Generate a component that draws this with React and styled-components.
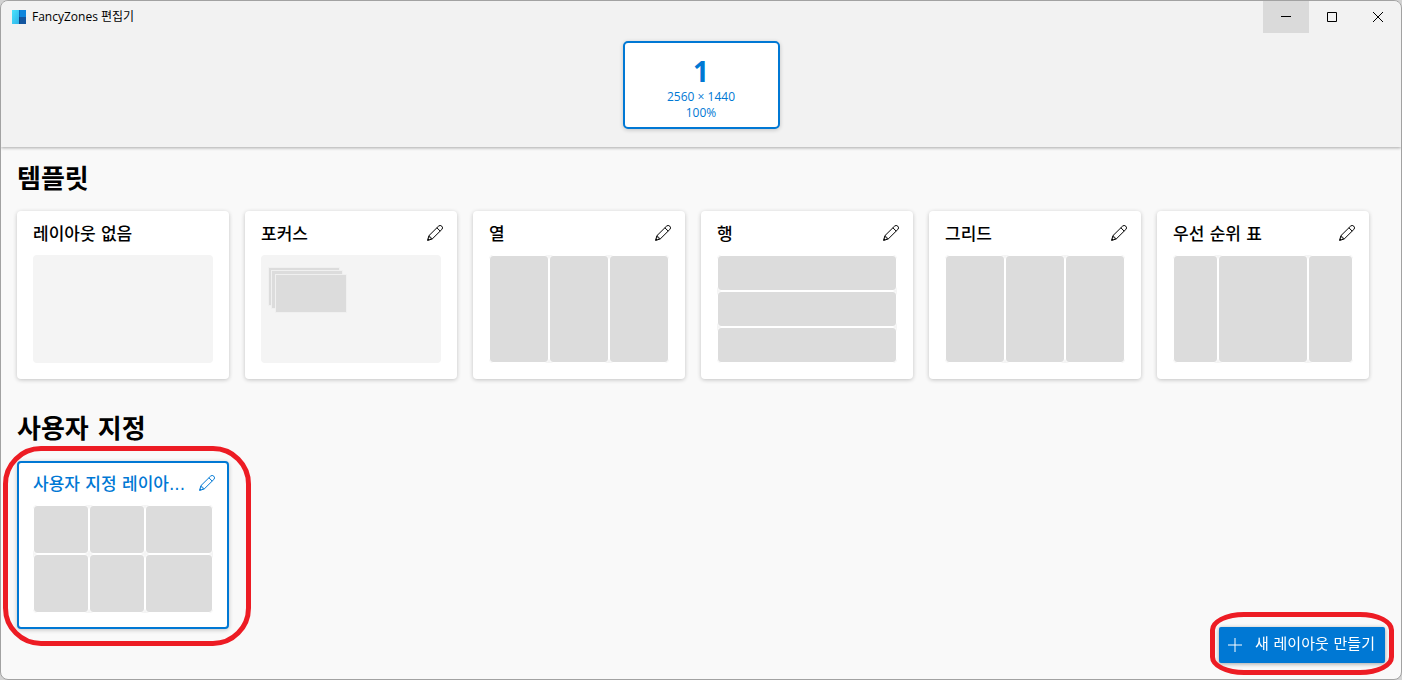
import React from "react";
import styled, { createGlobalStyle, css } from "styled-components";

const koreanFont = `"DejaVu Sans", "Noto Sans CJK KR", sans-serif`;

const Global = createGlobalStyle`
  *, *::before, *::after { box-sizing: border-box; }
  body {
    margin: 0;
    background: #d2d2d2;
    font-family: "Open Sans", "Noto Sans CJK KR", sans-serif;
    color: #000;
  }
  button { font: inherit; color: inherit; }
`;

const Window = styled.div`
  display: flex;
  flex-direction: column;
  min-height: 100vh;
  border: 1px solid #a2a2a2;
  border-radius: 8px;
  background: #f9f9f9;
  overflow: hidden;
`;

const Header = styled.header`
  display: flex;
  flex-direction: column;
  padding-bottom: 18px;
  background: #f2f2f2;
  box-shadow: 0 1px 3px rgba(0, 0, 0, 0.32);
`;

const TitleBar = styled.div`
  display: flex;
  align-items: flex-start;
  justify-content: space-between;
`;

const AppTitle = styled.div`
  display: flex;
  align-items: center;
  gap: 6px;
  height: 32px;
  padding-left: 11px;
  font-size: 12px;
  line-height: 16px;
`;

const CaptionButtons = styled.div`
  display: flex;
`;

const CaptionButton = styled.button`
  display: grid;
  place-items: center;
  width: 46px;
  height: 32px;
  padding: 0;
  border: 0;
  background: ${(p) => (p.$active ? "#dadada" : "transparent")};
`;

const Monitor = styled.button`
  display: flex;
  flex-direction: column;
  align-items: center;
  align-self: center;
  width: 157px;
  height: 88px;
  margin-top: 8px;
  padding: 10px 0 0;
  border: 2px solid #0078d4;
  border-radius: 5px;
  background: #fff;
  color: #0078d4;
  font-size: 12px;
  line-height: 16px;
  box-shadow: 0 1px 4px rgba(0, 0, 0, 0.2);
`;

const MonitorNumber = styled.strong`
  font-size: 28px;
  line-height: 36px;
`;

const Main = styled.main`
  display: flex;
  flex-direction: column;
  flex: 1;
  gap: 34px;
  padding: 16px;
`;

const Section = styled.section`
  display: flex;
  flex-direction: column;
  gap: 16px;
`;

const Heading = styled.h1`
  margin: 0;
  font-family: ${koreanFont};
  font-size: 26px;
  line-height: 32px;
  font-weight: 700;
`;

const CardList = styled.div`
  display: flex;
  flex-wrap: wrap;
  gap: 16px;
`;

const Card = styled.article`
  position: relative;
  width: 212px;
  border-radius: 4px;
  padding: 12px 16px 16px;
  background: #fff;
  box-shadow: 0 1px 4px rgba(0, 0, 0, 0.22);
  ${(p) =>
    p.$selected &&
    css`
      padding: 10px 14px 14px;
      border: 2px solid #0078d4;
      color: #0078d4;
    `}
`;

const CardHeader = styled.div`
  display: flex;
  align-items: center;
  gap: 8px;
  height: 20px;
  margin: 0 -2px 12px 0;
`;

const CardTitle = styled.h2`
  flex: 1;
  min-width: 0;
  margin: 0;
  padding-top: 2px;
  white-space: nowrap;
  font-family: ${koreanFont};
  font-size: 17px;
  line-height: 24px;
  font-weight: 500;
`;

const EditButton = styled.button`
  display: grid;
  place-items: center;
  padding: 0;
  border: 0;
  background: transparent;
`;

const Preview = styled.div`
  position: relative;
  display: grid;
  grid-template-columns: ${(p) => p.$columns || "1fr"};
  grid-template-rows: ${(p) => p.$rows || "1fr"};
  height: 108px;
  border-radius: 4px;
  background: #f4f4f4;
`;

const Zone = styled.div`
  border: 1px solid #fff;
  border-radius: 4px;
  background: #dcdcdc;
`;

const FloatingZone = styled.div`
  position: absolute;
  left: ${(p) => p.$x}px;
  top: ${(p) => p.$y}px;
  width: 72px;
  height: 39px;
  border: 1px solid #f0f0f0;
  background: #dcdcdc;
`;

const HighlightRing = styled.span`
  position: absolute;
  inset: ${(p) => p.$inset};
  border: 5px solid #ed1c24;
  border-radius: ${(p) => p.$radius};
  pointer-events: none;
`;

const CreateButton = styled.button`
  position: fixed;
  right: 17px;
  bottom: 17px;
  display: flex;
  align-items: center;
  gap: 13px;
  min-width: 166px;
  height: 36px;
  padding: 0 9px;
  border: 0;
  border-radius: 2px;
  background: #0078d4;
  color: #fff;
  font-family: ${koreanFont};
  font-size: 15px;
  line-height: 20px;
  white-space: nowrap;
  box-shadow: 0 1px 4px rgba(0, 0, 0, 0.35);
`;

const CreateLabel = styled.span`
  padding-bottom: 2px;
`;

const Pencil = () => (
  <svg width="16" height="16" viewBox="0 0 16 16" fill="none" stroke="currentColor" strokeLinejoin="round" aria-hidden="true">
    <path d="M.6 15.4 1.9 10.7 11.5 1.2a2.2 2.2 0 0 1 3.3 3.3L5.2 14ZM9.9 2.8l3.3 3.3M1.9 10.7 2.8 11.3 3.1 12.9 4.7 13.2 5.2 14" />
    <path fill="currentColor" stroke="none" d="M.4 15.6 1 13.2 2.8 15Z" />
  </svg>
);

const Logo = () => (
  <svg width="14" height="14" viewBox="0 0 14 14" aria-hidden="true">
    <defs>
      <linearGradient id="cyan" x2="1" y2="1">
        <stop stopColor="#4be3fb" />
        <stop offset="1" stopColor="#2fb4ea" />
      </linearGradient>
    </defs>
    <path fill="url(#cyan)" d="M0 0h7v14H0z" />
    <path fill="#0f86dc" d="M7 0h7v7H7z" />
    <path fill="#14569f" d="M7 7h7v7H7z" />
    <path fill="#0b6cbc" d="M7 0h1v7H7z" />
    <path fill="#0f4785" d="M7 7h1v7H7z" />
  </svg>
);

const templates = [
  { name: "레이아웃 없음", fixed: true, count: 0 },
  { name: "포커스", floating: [[7, 12], [10, 15], [14, 19]] },
  { name: "열", count: 3, columns: "repeat(3, 1fr)" },
  { name: "행", count: 3, rows: "repeat(3, 1fr)" },
  { name: "그리드", count: 3, columns: "repeat(3, 1fr)" },
  { name: "우선 순위 표", count: 3, columns: "1fr 2fr 1fr" },
];

const custom = [
  { name: "사용자 지정 레이아...", count: 6, columns: "56fr 56fr 68fr", rows: "49fr 59fr", selected: true },
];

function LayoutCard({ layout }) {
  return (
    <Card $selected={layout.selected}>
      <CardHeader>
        <CardTitle>{layout.name}</CardTitle>
        {!layout.fixed && (
          <EditButton aria-label="편집">
            <Pencil />
          </EditButton>
        )}
      </CardHeader>
      <Preview $columns={layout.columns} $rows={layout.rows}>
        {layout.floating?.map(([x, y]) => <FloatingZone key={x} $x={x} $y={y} />)}
        {Array.from({ length: layout.count || 0 }, (_, i) => <Zone key={i} />)}
      </Preview>
      {layout.selected && <HighlightRing $inset="-17px -24px -19px -16px" $radius="38px" />}
    </Card>
  );
}

export default function App() {
  return (
    <>
      <Global />
      <Window>
        <Header>
          <TitleBar>
            <AppTitle>
              <Logo />
              <span>FancyZones 편집기</span>
            </AppTitle>
            <CaptionButtons>
              <CaptionButton $active aria-label="최소화">
                <svg width="10" height="10" shapeRendering="crispEdges"><path fill="#000" d="M0 4h10v1H0z" /></svg>
              </CaptionButton>
              <CaptionButton aria-label="최대화">
                <svg width="10" height="10"><path fill="none" stroke="#000" d="M.5.5h9v9h-9z" /></svg>
              </CaptionButton>
              <CaptionButton aria-label="닫기">
                <svg width="10" height="10"><path stroke="#000" d="m0 0 10 10M10 0 0 10" /></svg>
              </CaptionButton>
            </CaptionButtons>
          </TitleBar>
          <Monitor>
            <MonitorNumber>1</MonitorNumber>
            <span>2560 × 1440</span>
            <span>100%</span>
          </Monitor>
        </Header>
        <Main>
          <Section>
            <Heading>템플릿</Heading>
            <CardList>
              {templates.map((t) => <LayoutCard key={t.name} layout={t} />)}
            </CardList>
          </Section>
          <Section>
            <Heading>사용자 지정</Heading>
            <CardList>
              {custom.map((t) => <LayoutCard key={t.name} layout={t} />)}
            </CardList>
          </Section>
        </Main>
        <CreateButton>
          <svg width="14" height="14" aria-hidden="true"><path stroke="#fff" d="M7 0v14M0 7h14" /></svg>
          <CreateLabel>새 레이아웃 만들기</CreateLabel>
          <HighlightRing $inset="-15px -9px -12px -9px" $radius="34px / 18px" />
        </CreateButton>
      </Window>
    </>
  );
}
